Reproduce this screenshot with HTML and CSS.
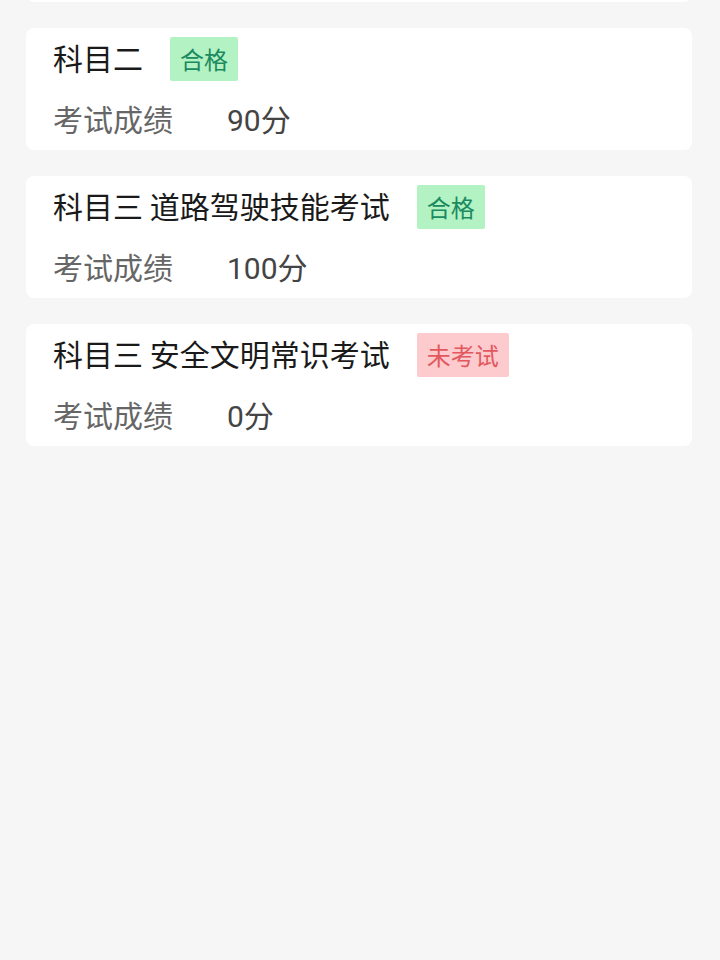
FILE: index.html
```html
<!DOCTYPE html>
<html>
  <head>
    <title>考试成绩</title>
    <meta name="viewport" content="width=device-width, initial-scale=1.0" />
    <link rel="stylesheet" href="styles.css">
  </head>
  <body>
    <div class="exam-list">
      <!-- previous card, scrolled above the top edge -->
      <div class="exam-card"></div>

      <div class="exam-card">
        <div class="exam-title">
          <span>科目二</span>
          <span class="tag tag-pass">合格</span>
        </div>
        <div class="exam-score">
          <span class="score-label">考试成绩</span>
          <span class="score-value">90分</span>
        </div>
      </div>

      <div class="exam-card">
        <div class="exam-title">
          <span>科目三 道路驾驶技能考试</span>
          <span class="tag tag-pass">合格</span>
        </div>
        <div class="exam-score">
          <span class="score-label">考试成绩</span>
          <span class="score-value">100分</span>
        </div>
      </div>

      <div class="exam-card">
        <div class="exam-title">
          <span>科目三 安全文明常识考试</span>
          <span class="tag tag-none">未考试</span>
        </div>
        <div class="exam-score">
          <span class="score-label">考试成绩</span>
          <span class="score-value">0分</span>
        </div>
      </div>
    </div>
  </body>
</html>
```

FILE: styles.css
```css
body {
  font-family: "Noto Sans CJK SC", "Noto Sans", sans-serif;
  margin: 0;
  padding: 0;
  background-color: #f6f6f6;
  min-height: 100vh;
}

/* list is scrolled: the first card sits mostly above the top edge */
.exam-list {
  display: flex;
  flex-direction: column;
  gap: 26px;
  margin: -120px 28px 0 26px;
}

.exam-card {
  background-color: white;
  border-radius: 8px;
  padding: 7px 27px 10px;
  height: 122px;
  box-sizing: border-box;
}

.exam-title {
  display: flex;
  align-items: center;
  gap: 27px;
  height: 44px;
  font-size: 30px;
  color: #1a1a1a;
}

.tag {
  font-size: 24px;
  line-height: 44px;
  padding: 0 10px;
  margin-top: 4px;
  border-radius: 2px;
}

.tag-pass {
  background-color: #b3f2c3;
  color: #1b8a60;
}

.tag-none {
  background-color: #fdcacd;
  color: #e2585e;
}

.exam-score {
  display: flex;
  align-items: center;
  height: 44px;
  margin-top: 17px;
  font-size: 30px;
}

.score-label {
  color: #666;
  width: 174px;
}

.score-value {
  font-family: Roboto, "Noto Sans CJK SC", sans-serif;
  color: #444;
}
```
